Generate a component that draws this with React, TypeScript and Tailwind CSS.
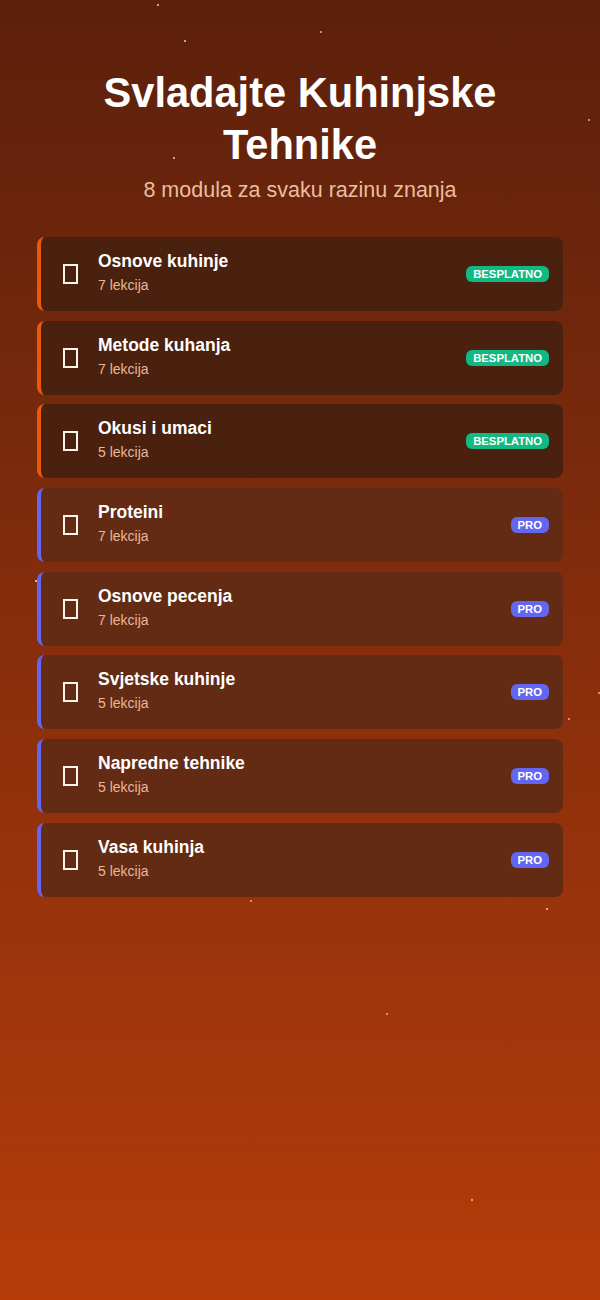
const modules = [
  { title: 'Osnove kuhinje', lessons: 7, free: true },
  { title: 'Metode kuhanja', lessons: 7, free: true },
  { title: 'Okusi i umaci', lessons: 5, free: true },
  { title: 'Proteini', lessons: 7, free: false },
  { title: 'Osnove pecenja', lessons: 7, free: false },
  { title: 'Svjetske kuhinje', lessons: 5, free: false },
  { title: 'Napredne tehnike', lessons: 5, free: false },
  { title: 'Vasa kuhinja', lessons: 5, free: false },
];

const sparks = [
  { x: 157, y: 4, c: 'bg-[#ffd27a]' },
  { x: 184, y: 40, c: 'bg-[#ffd27a]' },
  { x: 320, y: 31, c: 'bg-[#f4b36a]' },
  { x: 173, y: 157, c: 'bg-[#ffd27a]' },
  { x: 588, y: 119, c: 'bg-[#f4b36a]' },
  { x: 35, y: 580, c: 'bg-[#ffe9c0]' },
  { x: 598, y: 692, c: 'bg-[#f4b36a]' },
  { x: 568, y: 718, c: 'bg-[#f4b36a]' },
  { x: 250, y: 900, c: 'bg-[#f4b36a]' },
  { x: 546, y: 908, c: 'bg-[#ffd27a]' },
  { x: 386, y: 1013, c: 'bg-[#f4b36a]' },
  { x: 471, y: 1199, c: 'bg-[#ffd27a]' },
];

export default function App() {
  return (
    <div
      className="relative min-h-[1300px] w-full overflow-hidden bg-gradient-to-b from-[#5c200b] to-[#b53c09] px-[37px] pt-[67px]"
      style={{ fontFamily: '"Liberation Sans", Arial, sans-serif' }}
    >
      {sparks.map((s, i) => (
        <span
          key={i}
          className={`absolute h-[2px] w-[2px] rounded-full ${s.c}`}
          style={{ left: s.x, top: s.y }}
        />
      ))}

      <header className="relative text-center">
        <h1 className="text-[41.6px] font-bold leading-[52px] text-white">
          Svladajte Kuhinjske
          <br />
          Tehnike
        </h1>
        <p className="mt-[5px] text-[21.5px] leading-[28px] text-[#ecbd9f]">
          8 modula za svaku razinu znanja
        </p>
      </header>

      <div className="relative mt-[33px] flex flex-col gap-[9.7px]">
        {modules.map((m) => (
          <div
            key={m.title}
            className={
              m.free
                ? 'flex h-[74px] items-center rounded-lg border-l-4 border-[#ea580c] bg-[#4a210e] pl-[22px] pr-[14px]'
                : 'flex h-[74px] items-center rounded-lg border-l-4 border-[#6366f1] bg-[#632b14] pl-[22px] pr-[14px]'
            }
          >
            <span className="h-[20px] w-[15px] border-2 border-[#fff4ea]" />
            <div className="ml-[20px] flex-1 pb-[4px]">
              <div className="text-[17.5px] font-bold leading-[24px] text-white">{m.title}</div>
              <div className="mt-[2px] text-[14px] leading-[20px] text-[#e6b89b]">
                {m.lessons} lekcija
              </div>
            </div>
            {m.free ? (
              <span className="rounded-md bg-[#10b981] px-[7px] py-[1px] text-[11.3px] font-bold leading-[14px] text-white">
                BESPLATNO
              </span>
            ) : (
              <span className="rounded-md bg-[#6366f1] px-[7px] py-[1px] text-[11.3px] font-bold leading-[14px] text-white">
                PRO
              </span>
            )}
          </div>
        ))}
      </div>
    </div>
  );
}
